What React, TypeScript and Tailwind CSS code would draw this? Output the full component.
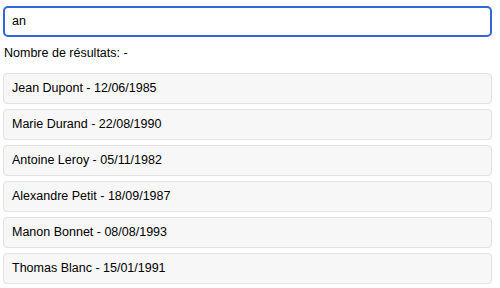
import { useState } from 'react';

const people = [
  { name: 'Jean Dupont', birth: '12/06/1985' },
  { name: 'Marie Durand', birth: '22/08/1990' },
  { name: 'Antoine Leroy', birth: '05/11/1982' },
  { name: 'Alexandre Petit', birth: '18/09/1987' },
  { name: 'Manon Bonnet', birth: '08/08/1993' },
  { name: 'Thomas Blanc', birth: '15/01/1991' },
];

export default function App() {
  const [query, setQuery] = useState('an');

  return (
    <div className="w-[500px] h-[288px] bg-white pl-[3px] pr-[8px] pt-[6px] font-['Liberation_Sans',Arial,sans-serif] text-[12.5px] text-black">
      <div className="h-[31px] rounded-[5px] border-2 border-[#3366d6] flex items-center px-[7px]">
        <input
          value={query}
          onChange={(e) => setQuery(e.target.value)}
          className="w-full bg-transparent outline-none text-[12.5px] text-black caret-black"
          autoFocus
        />
      </div>
      <p className="mt-[8px] h-[16px] leading-[16px] pl-[1px]">Nombre de résultats: -</p>
      <ul className="mt-[12px] flex flex-col gap-[5px]">
        {people.map((p) => (
          <li
            key={p.name}
            className="h-[31px] flex items-center px-[8px] bg-[#f7f7f7] border border-[#e2e2e2] rounded-[4px]"
          >
            {p.name} - {p.birth}
          </li>
        ))}
      </ul>
    </div>
  );
}
